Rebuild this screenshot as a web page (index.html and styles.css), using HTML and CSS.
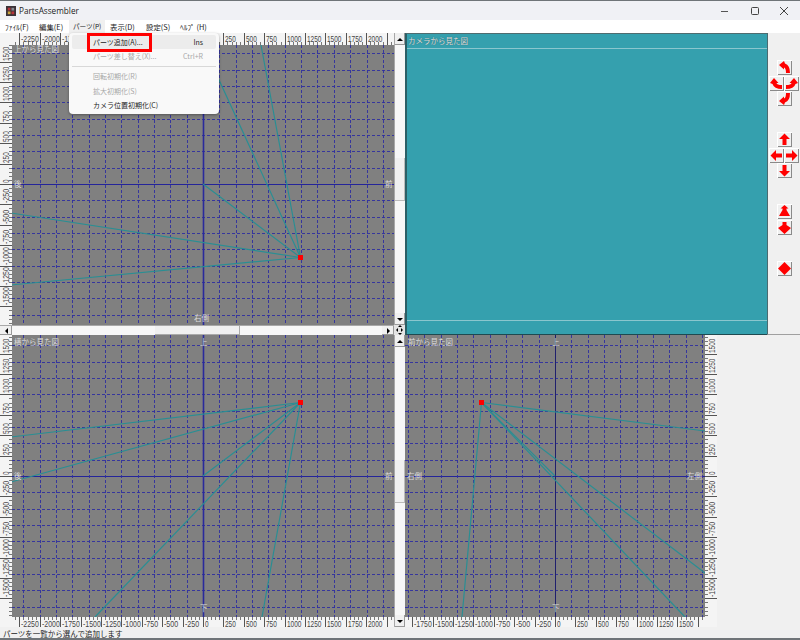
FILE: index.html
```html
<!DOCTYPE html>
<html lang="ja">
<head>
<meta charset="utf-8">
<title>PartsAssembler</title>
<link rel="stylesheet" href="styles.css">
</head>
<body>
<div class="window">
  <header class="titlebar">
    <svg class="app-icon" viewBox="0 0 11 11"><rect width="11" height="11" fill="#3a3238"/><path d="M2 2h3v3H2zM6 6h3v3H6z" fill="#b8323a"/><path d="M6 2h3v3H6z" fill="#8a8a90"/><path d="M2 6h3v3H2z" fill="#c9a23c"/></svg>
    <span class="app-title">PartsAssembler</span>
    <div class="win-controls">
      <svg viewBox="0 0 10 10"><path d="M0 5.5h7" stroke="#555" fill="none"/></svg>
      <svg viewBox="0 0 10 10"><rect x="1.5" y="1.5" width="7" height="7" rx="1" stroke="#444" fill="none"/></svg>
      <svg viewBox="0 0 10 10"><path d="M1 1l8 8M9 1l-8 8" stroke="#444" fill="none"/></svg>
    </div>
  </header>
  <nav class="menubar">
    <span class="menu-item">ﾌｧｲﾙ(F)</span>
    <span class="menu-item">編集(E)</span>
    <span class="menu-item menu-item-open">パーツ(P)</span>
    <span class="menu-item">表示(D)</span>
    <span class="menu-item">設定(S)</span>
    <span class="menu-item">ﾍﾙﾌﾟ (H)</span>
  </nav>
  <main class="work">
    <svg class="view view-top" id="view-top"></svg>
    <div class="vscroll">
      <span class="sb-btn"><i class="tri tri-up"></i></span><span class="sb-track"></span><span class="sb-thumb"></span><span class="sb-track"></span><span class="sb-btn"><i class="tri tri-down"></i></span>
    </div>
    <section class="camera">
      <div class="camera-head">カメラから見た図</div>
      <div class="camera-foot"></div>
    </section>
    <aside class="toolbar">
      <div class="cluster">
        <button class="tb tb-n"><svg viewBox="0 0 15 15"><use href="#rot-v"/></svg></button>
        <button class="tb tb-w"><svg viewBox="0 0 15 15"><use href="#rot-h"/></svg></button>
        <button class="tb tb-e"><svg viewBox="0 0 15 15"><use href="#rot-h" transform="matrix(-1 0 0 1 15 0)"/></svg></button>
        <button class="tb tb-s"><svg viewBox="0 0 15 15"><use href="#rot-v" transform="matrix(1 0 0 -1 0 15)"/></svg></button>
      </div>
      <div class="cluster cluster-move">
        <button class="tb tb-n"><svg viewBox="0 0 15 15"><polygon class="red" points="7.5,1.5 13,7 9.5,7 9.5,13 5.5,13 5.5,7 2,7"/></svg></button>
        <button class="tb tb-w"><svg viewBox="0 0 15 15"><polygon class="red" points="1.5,7.5 7,2 7,5.5 13,5.5 13,9.5 7,9.5 7,13"/></svg></button>
        <button class="tb tb-e"><svg viewBox="0 0 15 15"><polygon class="red" points="13.5,7.5 8,2 8,5.5 2,5.5 2,9.5 8,9.5 8,13"/></svg></button>
        <button class="tb tb-s"><svg viewBox="0 0 15 15"><polygon class="red" points="7.5,13.5 13,8 9.5,8 9.5,2 5.5,2 5.5,8 2,8"/></svg></button>
      </div>
      <div class="stack stack-zoom">
        <button class="tb"><svg viewBox="0 0 15 15"><polygon class="red" points="7.5,1 11.5,4.5 9.5,4.5 9.5,6 13,12 2,12 5.5,6 5.5,4.5 3.5,4.5"/></svg></button>
        <button class="tb"><svg viewBox="0 0 15 15"><polygon class="red" points="5.5,2 9.5,2 9.5,5 14,8 7.5,14 1,8 5.5,5"/></svg></button>
      </div>
      <button class="tb tb-reset"><svg viewBox="0 0 15 15"><polygon class="red" points="7.5,1 14,7.5 7.5,14 1,7.5"/></svg></button>
    </aside>
    <div class="hscroll">
      <span class="sb-btn"><i class="tri tri-left"></i></span><span class="sb-track"></span><span class="sb-thumb"></span><span class="sb-track"></span><span class="sb-btn"><i class="tri tri-right"></i></span>
    </div>
    <div class="corner"><i class="tri tri-up tri-c1"></i><span class="corner-mid"><i class="tri tri-left"></i><i class="tri tri-right"></i></span><i class="tri tri-down tri-c1"></i></div>
    <svg class="view view-side" id="view-side"></svg>
    <div class="vscroll">
      <span class="sb-btn"><i class="tri tri-up"></i></span><span class="sb-track"></span><span class="sb-thumb"></span><span class="sb-track"></span><span class="sb-btn"><i class="tri tri-down"></i></span>
    </div>
    <div class="front-cell"><svg class="view view-front" id="view-front"></svg></div>
  </main>
  <footer class="statusbar">パーツを一覧から選んで追加します</footer>

  <div class="popup">
    <div class="popup-row popup-row-hover"><span>パーツ追加(A)...</span><span>Ins</span></div>
    <div class="popup-row popup-row-off"><span>パーツ差し替え(X)...</span><span>Ctrl+R</span></div>
    <div class="popup-sep"></div>
    <div class="popup-row popup-row-off"><span>回転初期化(R)</span></div>
    <div class="popup-row popup-row-off"><span>拡大初期化(S)</span></div>
    <div class="popup-row"><span>カメラ位置初期化(C)</span></div>
  </div>
  <div class="callout"></div>
</div>

<svg class="defs" width="0" height="0">
  <defs>
    <path id="rot-v" fill="#f00" d="M2 5L7 1L8 3.5Q13 5 13 13H9Q9 8 7 7.5L7 9.5Z"/>
    <path id="rot-h" fill="#f00" d="M5 2L1 7L3.5 8Q5 13 13 13V9Q8 9 7.5 7L9.5 7Z"/>
  </defs>
</svg>
<script src="app.js"></script>
</body>
</html>
```
FILE: styles.css
```css
* { box-sizing: border-box; }
html, body { margin: 0; padding: 0; }
body { width: 800px; height: 640px; overflow: hidden; background: #f0f0f0; font-family: "Noto Sans CJK JP", "Liberation Sans", sans-serif; }

.window { position: relative; width: 800px; height: 640px; display: flex; flex-direction: column; border-top: 1px solid #6f7478; border-bottom: 2px solid #6f7478; overflow: hidden; }

.titlebar { height: 19px; flex: none; display: flex; align-items: center; padding-left: 6px; background: #f0f1f5; }
.app-icon { width: 10px; height: 10px; margin-right: 3px; }
.app-title { font: 8.2px "Open Sans", "Liberation Sans", sans-serif; color: #222; }
.win-controls { margin-left: auto; display: flex; gap: 19px; padding-right: 11px; }
.win-controls svg { width: 10px; height: 10px; }

.menubar { height: 13px; flex: none; display: grid; grid-template-columns: 34px 35px 36px 36px 34px 35px 1fr; background: #fff; font-size: 7.4px; line-height: 13px; color: #222; }
.menu-item { padding-left: 5px; white-space: nowrap; }
.menu-item-open { background: #f0f0f0; padding-left: 4px; font-size: 6.6px; }

.work { height: 594px; flex: none; display: grid; grid-template-columns: 394px 11px 362px 33px; grid-template-rows: 292px 10px 292px; }

.view { display: block; width: 394px; height: 292px; }
.view-top { grid-column: 1; grid-row: 1; }
.view-side { grid-column: 1; grid-row: 3; }
.front-cell { grid-column: 3 / 5; grid-row: 3; }
.view-front { width: 312px; }

.r-bg { fill: #f4f4f4; }
.c-bg { fill: #808080; }
.g-dash { stroke: #2d2da0; stroke-width: 1; stroke-dasharray: 3 2; stroke-opacity: .9; shape-rendering: crispEdges; }
.g-axis { stroke: #24249a; stroke-width: 1; shape-rendering: crispEdges; }
.g-axis-v { stroke: #2a2a9c; stroke-width: 1.6; }
.g-axis-f { stroke: #20206e; stroke-width: 1; shape-rendering: crispEdges; }
.g-wire { stroke: #2a8e93; stroke-width: 1.2; fill: none; }
.g-node { fill: #f00; }
.r-tick { stroke: #555; stroke-width: 1; shape-rendering: crispEdges; }
.r-minor { stroke: #777; stroke-width: 1; shape-rendering: crispEdges; }
.r-num { font: 9.5px "Liberation Sans", sans-serif; fill: #444; }
.v-label { font: 7.5px "Noto Sans CJK JP", sans-serif; fill: #dcdcdc; }

.vscroll { grid-column: 2; display: flex; flex-direction: column; border-left: 1px solid #a8a8a8; background: #f7f7f7; }
.vscroll .sb-btn { height: 12px; }
.vscroll .sb-thumb { height: 43px; box-shadow: inset -1px -1px #bbb; background: #f0f0f0; }
.hscroll { grid-column: 1; grid-row: 2; display: flex; background: #f7f7f7; border-top: 1px solid #a8a8a8; }
.hscroll .sb-btn { width: 12px; }
.hscroll .sb-thumb { width: 85px; box-shadow: inset -1px -1px #aaa; background: #f0f0f0; }
.sb-track { flex: 1; }
.sb-btn { flex: none; display: flex; align-items: center; justify-content: center; background: #f0f0f0; box-shadow: inset -1px -1px #999; }
.tri { display: block; width: 0; height: 0; border: 3px solid transparent; }
.tri-up { border-top: 0; border-bottom: 3px solid #000; }
.tri-down { border-bottom: 0; border-top: 3px solid #000; }
.tri-left { border-left: 0; border-right: 3px solid #000; }
.tri-right { border-right: 0; border-left: 3px solid #000; }

.corner { grid-column: 2; grid-row: 2; display: flex; flex-direction: column; align-items: center; justify-content: center; gap: 1px; background: #e4e4e4; }
.corner .tri { border-width: 2px; }
.corner .tri-up { border-top: 0; }
.corner .tri-down { border-bottom: 0; }
.corner .tri-left { border-left: 0; }
.corner .tri-right { border-right: 0; }
.corner-mid { display: flex; gap: 3px; }

.camera { grid-column: 3; grid-row: 1 / 3; display: flex; flex-direction: column; justify-content: space-between; background: #35a0ae; border-top: 1px solid #4f6c70; border-left: 2px solid #2b5f66; border-bottom: 1px solid #1f4a50; }
.camera-head { height: 15px; border-bottom: 1px solid #8ac6ce; font-size: 7.5px; line-height: 13px; color: #e2e2e2; padding-left: 1px; text-shadow: 0 0 1px #1e4c52; }
.camera-foot { height: 14px; border-top: 1px solid #8ac6ce; }

.toolbar { grid-column: 4; grid-row: 1 / 3; display: flex; flex-direction: column; padding: 27px 0 0 1px; border-left: 1px solid #4a6a70; border-bottom: 1px solid #a0a0a0; background: #f0f0f0; }
.tb { display: block; width: 15px; height: 15px; padding: 0; border: 0; background: #f0f0f0; box-shadow: inset 1px 1px #fff, inset -1px -1px #8a8a8a; }
.tb svg { display: block; width: 15px; height: 15px; }
.red { fill: #f00; }
.cluster { display: grid; width: 30px; grid-template-columns: 15px 15px; grid-auto-rows: 15px; row-gap: 0.5px; }
.cluster .tb-n, .cluster .tb-s { grid-column: 1 / 3; justify-self: center; }
.cluster-move { margin-top: 26px; }
.stack { display: flex; flex-direction: column; gap: 1px; align-self: flex-start; margin-left: 8px; }
.stack-zoom { margin-top: 26px; }
.tb-reset { margin: 26px 0 0 8px; }

.statusbar { flex: 1; font-size: 7.5px; line-height: 11px; padding: 1px 0 0 3px; color: #222; background: #f0f0f0; }

.popup { position: absolute; left: 69px; top: 32px; width: 150px; height: 81px; padding: 1px 3px 2px; background: #f9f9f9; border-radius: 4px; box-shadow: 0 1px 3px rgba(0,0,0,.35); font-size: 7px; color: #222; }
.popup-row { height: 14px; padding: 0 13px 0 21px; display: flex; align-items: center; justify-content: space-between; border-radius: 2px; white-space: nowrap; }
.popup-row-hover { background: #ececec; margin-top: 1px; }
.popup-row-off { color: #a8a8a8; }
.popup-sep { height: 1px; margin: 3px 0 2px; background: #d8d8d8; }
.popup-sep + .popup-row { margin-bottom: 1px; }
.callout { position: absolute; left: 87px; top: 32px; width: 65px; height: 19px; border: 3px solid #f00; }
.defs { position: absolute; }
```
FILE: app.js
```js
const GRID = 16.35;
const NS = { ruler: 20.4, minor: 4.08 };

function range(center, from, to, step) {
  const out = [];
  const lo = Math.ceil((from - center) / step);
  const hi = Math.floor((to - center) / step);
  for (let k = lo; k <= hi; k++) out.push({ k, p: Math.round(center + k * step) + 0.5 });
  return out;
}

function numWidth(v) {
  const s = String(Math.abs(v)).length * 3.6;
  return v < 0 ? s + 3.4 : s;
}

function numText(x, y, v, rot) {
  const t = rot ? ` transform="rotate(-90 ${x} ${y})"` : '';
  return `<text class="r-num" x="${x}" y="${y}" textLength="${numWidth(v)}" lengthAdjust="spacingAndGlyphs"${t}>${v}</text>`;
}

function hRuler(c, y0, y1, minorAtBottom, baseline) {
  let o = `<rect class="r-bg" x="0" y="${y0}" width="${c.w}" height="${y1 - y0}"/>`;
  range(c.cx, c.x0, c.x1, NS.minor).forEach(({ p }) => {
    const a = minorAtBottom ? y1 - 3 : y0;
    o += `<line class="r-minor" x1="${p}" x2="${p}" y1="${a}" y2="${a + 3}"/>`;
  });
  range(c.cx, c.x0, c.x1, NS.ruler).forEach(({ k, p }) => {
    o += `<line class="r-tick" x1="${p}" x2="${p}" y1="${y0}" y2="${y1}"/>`;
    const v = k * 250;
    if (v >= c.minV && v <= c.maxV) o += numText(p + 1.5, baseline, v, false);
  });
  return o;
}

function vRuler(c, x0, x1, minorAtRight, baseline) {
  let o = `<rect class="r-bg" x="${x0}" y="0" width="${x1 - x0}" height="${c.h}"/>`;
  range(c.cy, c.y0, c.y1, NS.minor).forEach(({ p }) => {
    const a = minorAtRight ? x1 - 3 : x0;
    o += `<line class="r-minor" x1="${a}" x2="${a + 3}" y1="${p}" y2="${p}"/>`;
  });
  range(c.cy, c.y0, c.y1, NS.ruler).forEach(({ k, p }) => {
    o += `<line class="r-tick" x1="${x0}" x2="${x1}" y1="${p}" y2="${p}"/>`;
    const v = -k * 250;
    if (Math.abs(v) <= 1500) o += numText(baseline, p - 1.5, v, true);
  });
  return o;
}

function draw(id, c) {
  const svg = document.getElementById(id);
  svg.setAttribute('viewBox', `0 0 ${c.w} ${c.h}`);
  let o = `<rect class="c-bg" x="${c.x0}" y="${c.y0}" width="${c.x1 - c.x0}" height="${c.y1 - c.y0}"/>`;
  range(c.cy, c.y0, c.y1, GRID).forEach(({ k, p }) => {
    o += `<line class="${k ? 'g-dash' : 'g-axis'}" x1="${c.x0}" x2="${c.x1}" y1="${p}" y2="${p}"/>`;
  });
  range(c.cx, c.x0, c.x1, GRID).forEach(({ k, p }) => {
    o += `<line class="${k ? 'g-dash' : c.vAxis}" x1="${p}" x2="${p}" y1="${c.y0}" y2="${c.y1}"/>`;
  });
  c.wires.forEach(([x, y]) => {
    o += `<line class="g-wire" x1="${c.node[0]}" y1="${c.node[1]}" x2="${x}" y2="${y}"/>`;
  });
  o += `<rect class="g-node" x="${c.node[0] - 2.5}" y="${c.node[1] - 2.5}" width="5" height="5"/>`;
  c.labels.forEach(([x, y, t]) => { o += `<text class="v-label" x="${x}" y="${y}">${t}</text>`; });
  if (c.topRuler) o += hRuler(c, 0, 12, true, 8.5);
  if (c.bottomRuler) o += hRuler(c, c.y1, c.h, false, c.h - 0.5);
  if (c.leftRuler) o += vRuler(c, 0, 12, true, 9);
  if (c.rightRuler) o += vRuler(c, c.x1, c.w, false, c.w - 2);
  svg.innerHTML = o;
}

draw('view-top', {
  w: 394, h: 292, x0: 12, x1: 394, y0: 12, y1: 292, cx: 203, cy: 151, vAxis: 'g-axis-v',
  topRuler: true, leftRuler: true, minV: -2250, maxV: 2000,
  node: [300.5, 224.5],
  wires: [[11, 180], [11, 252], [203, 151], [203, 12], [261, 12]],
  labels: [[14, 19, '上から見た図'], [14, 154, '後'], [385, 154, '前'], [194, 288, '右側']]
});

draw('view-side', {
  w: 394, h: 292, x0: 12, x1: 394, y0: 0, y1: 282, cx: 203, cy: 141, vAxis: 'g-axis-v',
  bottomRuler: true, leftRuler: true, minV: -2250, maxV: 2000,
  node: [300.5, 67.5],
  wires: [[11, 102], [11, 147], [203, 141], [95, 282], [262, 282]],
  labels: [[14, 10, '横から見た図'], [200, 10, '上'], [14, 144, '後'], [385, 144, '前'], [200, 276, '下']]
});

draw('view-front', {
  w: 312, h: 292, x0: 0, x1: 300, y0: 0, y1: 282, cx: 150, cy: 141, vAxis: 'g-axis-f',
  bottomRuler: true, rightRuler: true, minV: -1750, maxV: 1500,
  node: [76.5, 67.5],
  wires: [[300, 96], [300, 238], [280, 282], [150, 141], [57, 282]],
  labels: [[3, 10, '前から見た図'], [147, 10, '上'], [2, 144, '右側'], [282, 144, '左側'], [147, 276, '下']]
});
```
